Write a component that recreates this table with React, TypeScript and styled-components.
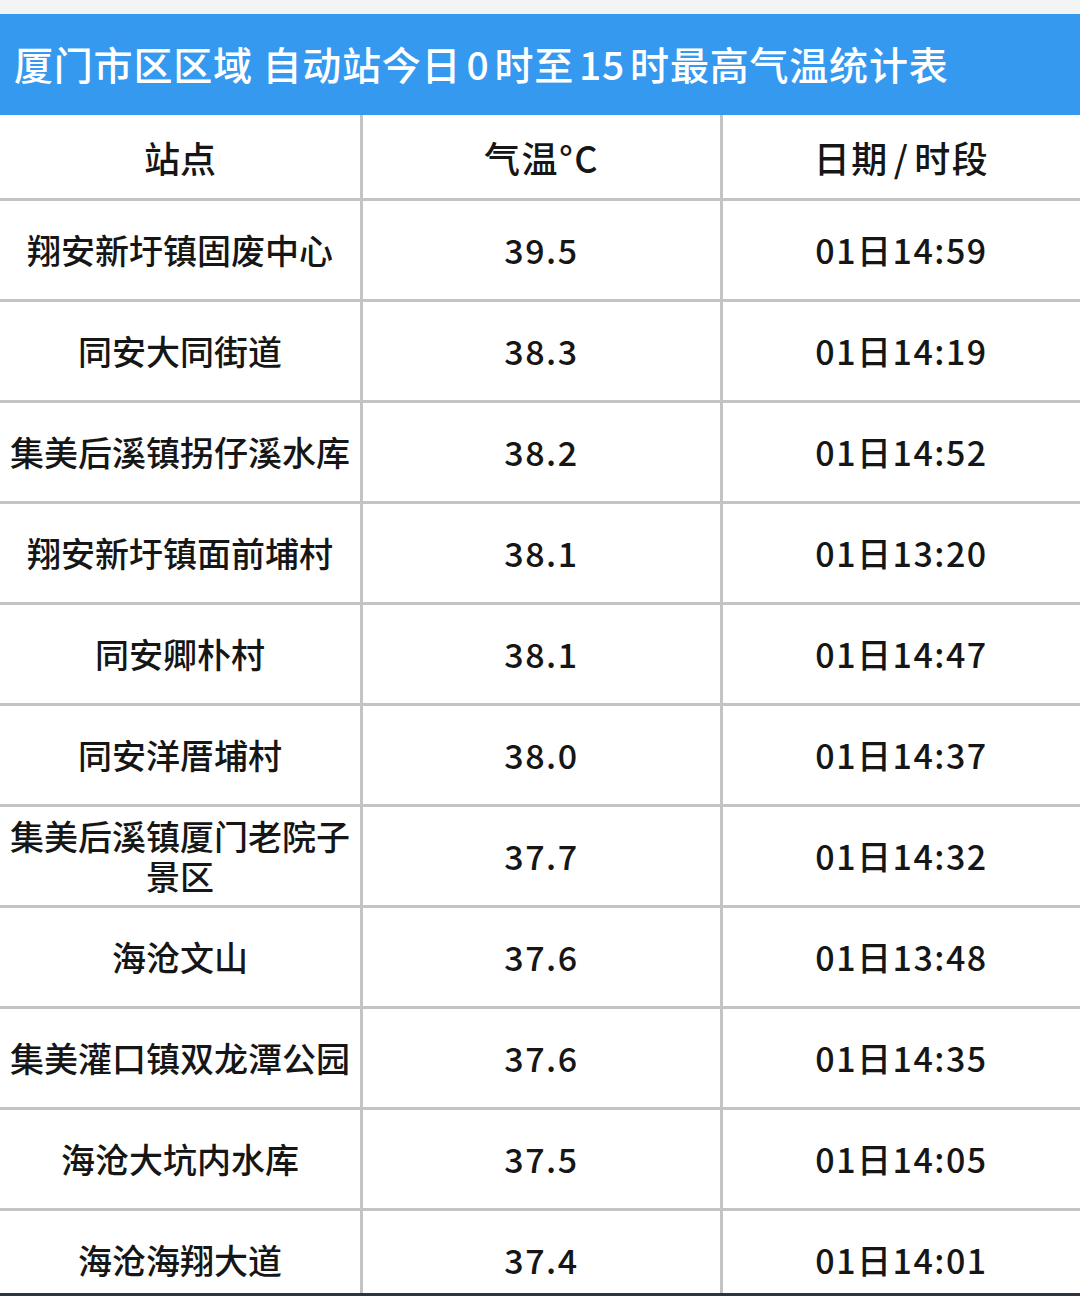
import React from "react";
import styled, { createGlobalStyle } from "styled-components";

const Global = createGlobalStyle`
  html, body { margin: 0; padding: 0; background: #ffffff; }
  body { font-family: "Noto Sans CJK SC", "Noto Sans", sans-serif; }
  * { box-sizing: border-box; }
`;

const Page = styled.div`
  width: 1080px;
  height: 1296px;
  overflow: hidden;
  display: flex;
  flex-direction: column;
  background: #ffffff;
`;

const TopStrip = styled.div`
  height: 14px;
  background: #f3f4f4;
  flex: none;
`;

const TitleBar = styled.div`
  height: 101px;
  flex: none;
  background: #3599f0;
  color: #ffffff;
  display: flex;
  align-items: center;
  padding-left: 14px;
  font-size: 39px;
  font-weight: 500;
  letter-spacing: 0.8px;
  padding-bottom: 4px;
  white-space: pre;
`;

const Digits = styled.span`
  margin: 0 5px;
`;

const Table = styled.div`
  display: grid;
  grid-template-columns: 363px 360px 357px;
  grid-auto-rows: 101px;
  grid-template-rows: 86px;
  flex: 1;
  min-height: 0;
  overflow: hidden;
`;

const Cell = styled.div<{ $last?: boolean; $head?: boolean }>`
  display: flex;
  align-items: center;
  justify-content: center;
  text-align: center;
  border-right: ${(p) => (p.$last ? "none" : "3px solid #c4c4c4")};
  border-bottom: 3px solid #c4c4c4;
  color: #161616;
  font-size: ${(p) => (p.$head ? "36px" : "34px")};
  font-weight: 500;
  line-height: 40px;
  padding: 0 2px;
  white-space: pre-wrap;
`;

const Num = styled.span`
  letter-spacing: 1.5px;
`;

const Slash = styled.span`
  margin: 0 5px;
`;

const BottomBar = styled.div`
  height: 3px;
  background: #2c3642;
  flex: none;
`;

const rows: [string, string, string][] = [
  ["翔安新圩镇固废中心", "39.5", "01日14:59"],
  ["同安大同街道", "38.3", "01日14:19"],
  ["集美后溪镇拐仔溪水库", "38.2", "01日14:52"],
  ["翔安新圩镇面前埔村", "38.1", "01日13:20"],
  ["同安卿朴村", "38.1", "01日14:47"],
  ["同安洋厝埔村", "38.0", "01日14:37"],
  ["集美后溪镇厦门老院子景区", "37.7", "01日14:32"],
  ["海沧文山", "37.6", "01日13:48"],
  ["集美灌口镇双龙潭公园", "37.6", "01日14:35"],
  ["海沧大坑内水库", "37.5", "01日14:05"],
  ["海沧海翔大道", "37.4", "01日14:01"],
];

export default function App() {
  return (
    <Page>
      <Global />
      <TopStrip />
      <TitleBar>
        厦门市区区域 自动站今日<Digits>0</Digits>时至<Digits>15</Digits>时最高气温统计表
      </TitleBar>
      <Table>
        <Cell $head>站点</Cell>
        <Cell $head>
          <Num>气温°C</Num>
        </Cell>
        <Cell $head $last>
          <Num>
            日期<Slash>/</Slash>时段
          </Num>
        </Cell>
        {rows.map(([name, t, d]) => (
          <React.Fragment key={name}>
            <Cell>{name}</Cell>
            <Cell>
              <Num>{t}</Num>
            </Cell>
            <Cell $last>
              <Num>{d}</Num>
            </Cell>
          </React.Fragment>
        ))}
      </Table>
      <BottomBar />
    </Page>
  );
}
